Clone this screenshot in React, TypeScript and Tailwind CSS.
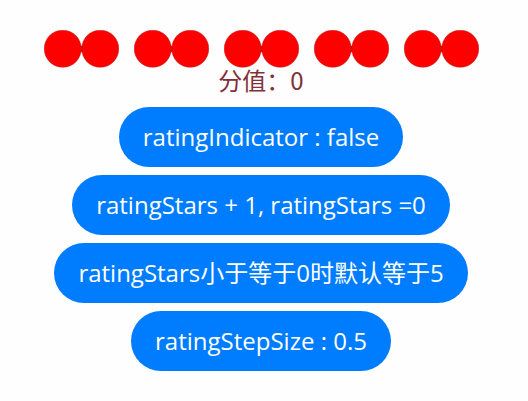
const actions = [
  'ratingIndicator : false',
  'ratingStars + 1, ratingStars =0',
  'ratingStars小于等于0时默认等于5',
  'ratingStepSize : 0.5',
];

function Star({ value }: { value: number }) {
  return (
    <button type="button" aria-label={`${value}`} className="block">
      <svg viewBox="0 0 75 38" className="block h-[38px] w-[75px]" aria-hidden="true">
        <path d="M36.5 16h2v6h-2z" fill="#b51010" />
        <circle cx="18.75" cy="18.75" r="18.6" fill="#ff0000" stroke="#a51c1c" strokeWidth="0.4" />
        <circle cx="56.25" cy="18.75" r="18.6" fill="#ff0000" stroke="#a51c1c" strokeWidth="0.4" />
      </svg>
    </button>
  );
}

export default function App() {
  return (
    <main className="flex min-h-screen flex-col items-center bg-[#fefefe] pt-[30px] pr-1.5 font-['Open_Sans','Noto_Sans_CJK_SC',sans-serif] text-2xl">
      <div className="flex gap-[15px]">
        {[1, 2, 3, 4, 5].map((value) => (
          <Star key={value} value={value} />
        ))}
      </div>
      <p className="font-['Noto_Sans_CJK_SC',sans-serif] leading-6 text-[#7f3038]">分值：0</p>
      <div className="mt-[15px] flex flex-col items-center gap-2">
        {actions.map((label) => (
          <button
            key={label}
            type="button"
            className="h-[60px] rounded-full bg-[#007dff] px-6 font-normal whitespace-nowrap text-white"
          >
            {label}
          </button>
        ))}
      </div>
    </main>
  );
}
